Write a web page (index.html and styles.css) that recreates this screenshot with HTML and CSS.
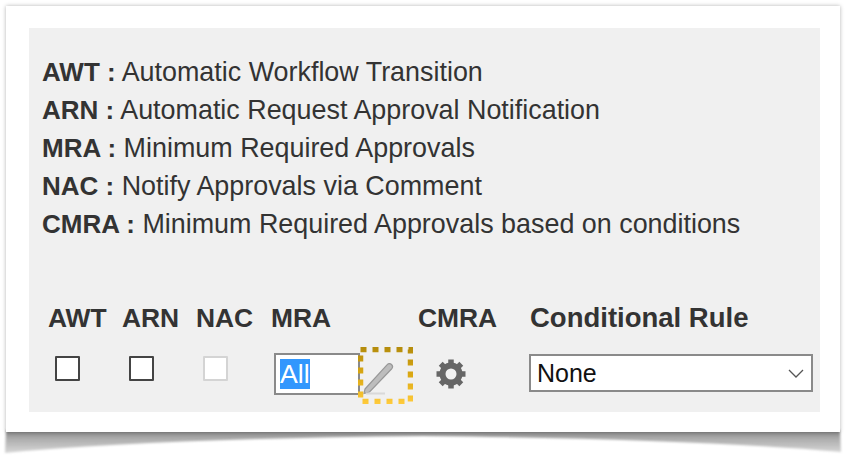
FILE: index.html
```html
<!DOCTYPE html>
<html lang="en">
<head>
    <meta charset="UTF-8">
    <meta name="viewport" content="width=device-width, initial-scale=1.0">
    <title>Approval settings legend</title>
    <link rel="stylesheet" href="styles.css">
</head>
<body>
    <svg class="shadow" width="854" height="461" viewBox="0 0 854 461">
        <defs>
            <linearGradient id="shadowFill" gradientUnits="userSpaceOnUse" x1="0" y1="432" x2="0" y2="454">
                <stop offset="0" stop-color="#8c8c8c"/>
                <stop offset="0.3" stop-color="#acacac"/>
                <stop offset="1" stop-color="#dadada"/>
            </linearGradient>
            <filter id="soft"><feGaussianBlur stdDeviation="1"/></filter>
        </defs>
        <path d="M6 430H840L841 452Q700 439 423 436Q150 439 5 453Z" fill="url(#shadowFill)" filter="url(#soft)"/>
    </svg>
    <div class="card">
        <div class="panel">
            <ul class="legend">
                <li><b>AWT :</b> Automatic Workflow Transition</li>
                <li><b>ARN :</b> Automatic Request Approval Notification</li>
                <li><b>MRA :</b> Minimum Required Approvals</li>
                <li><b>NAC :</b> Notify Approvals via Comment</li>
                <li><b>CMRA :</b> Minimum Required Approvals based on conditions</li>
            </ul>
            <div class="settings">
                <div class="head">AWT</div>
                <div class="head">ARN</div>
                <div class="head">NAC</div>
                <div class="head">MRA</div>
                <div class="head">CMRA</div>
                <div class="head wide">Conditional Rule</div>

                <div class="cell"><span class="check"></span></div>
                <div class="cell"><span class="check"></span></div>
                <div class="cell"><span class="check off"></span></div>
                <div class="cell">
                    <div class="field"><span class="picked">All</span></div>
                    <svg class="edit" width="55" height="57" viewBox="0 0 55 57">
                        <defs>
                            <linearGradient id="dots" gradientUnits="userSpaceOnUse" x1="0" y1="0" x2="0" y2="57">
                                <stop offset="0" stop-color="#b48c0c"/>
                                <stop offset="0.5" stop-color="#dca913"/>
                                <stop offset="1" stop-color="#ffcb3c"/>
                            </linearGradient>
                        </defs>
                        <path d="M7 42L29 18C30 16.500 32 16 33.500 17.500C35 19 34.500 21 33.500 22L11.500 45L6 46.500Z" fill="#bdbdbd" stroke="#989898" stroke-width="1.200"/>
                        <path d="M8 46.500H27" stroke="#d9d9d9" stroke-width="2"/>
                        <rect x="2.500" y="2.500" width="50" height="52" fill="none" stroke="url(#dots)" stroke-width="5.500" stroke-dasharray="6 6"/>
                    </svg>
                </div>
                <div class="cell gear-cell">
                    <svg width="32" height="32" viewBox="0 0 32 32">
                        <circle cx="16" cy="16" r="8.500" fill="none" stroke="#666" stroke-width="6"/>
                        <path d="M16 1.500V6M16 26V30.500M1.500 16H6M26 16H30.500M5.700 5.700L9 9M23 23L26.300 26.300M26.300 5.700L23 9M9 23L5.700 26.300" stroke="#666" stroke-width="5.500"/>
                    </svg>
                </div>
                <div class="cell">
                    <div class="select">
                        <span>None</span>
                        <svg width="16" height="9" viewBox="0 0 16 9"><path d="M1 1L8 8L15 1" fill="none" stroke="#555" stroke-width="1.300"/></svg>
                    </div>
                </div>
            </div>
        </div>
    </div>
</body>
</html>
```

FILE: styles.css
```css
body {
    font-family: "Liberation Sans", Arial, sans-serif;
    background-color: #fff;
    color: #333;
    margin: 0;
    padding: 6px 14px 0 6px;
    height: 455px;
    box-sizing: border-box;
    overflow: hidden;
}
.shadow {
    position: absolute;
    left: 0;
    top: 0;
}
.card {
    position: relative;
    height: 426px;
    box-sizing: border-box;
    padding: 22px 20px 20px 23px;
    background: #fff;
    box-shadow: 0 0 4px rgba(0, 0, 0, 0.3);
}
.panel {
    height: 384px;
    box-sizing: border-box;
    padding: 25px 0 0 13px;
    background: #f0f0f0;
}
.legend {
    list-style: none;
    margin: 0;
    padding: 0;
    font-size: 26.9px;
    line-height: 38px;
}
.legend b {
    font-size: 26px;
}
.settings {
    display: grid;
    grid-template-columns: 74px 74px 75px 147px 112px 284px;
    grid-template-rows: 39px 60px;
    margin: 59px 0 0 6px;
}
.head {
    font-size: 26.4px;
    font-weight: bold;
    line-height: 32px;
    white-space: nowrap;
}
.head.wide {
    font-size: 27.5px;
}
.cell {
    display: flex;
    align-items: center;
    height: 60px;
}
.check {
    display: block;
    width: 21px;
    height: 21px;
    margin: 0 0 6px 7px;
    border: 2px solid #444;
    border-radius: 1px;
    background: #fff;
}
.check.off {
    border-color: #d4d4d4;
}
.field {
    flex: none;
    box-sizing: border-box;
    width: 86px;
    height: 42px;
    margin: 6px 0 0 3px;
    padding: 4px 0 0 4px;
    border: 2px solid #8a8a8a;
    background: #fff;
    color: #fff;
    font-size: 26.7px;
    line-height: 30px;
}
.picked {
    display: inline-block;
    height: 30px;
    background: #3297fd;
}
.edit {
    flex: none;
    margin: 9px 0 0 -2px;
}
.gear-cell svg {
    margin: 6px 0 0 17px;
}
.select {
    display: flex;
    align-items: center;
    justify-content: space-between;
    box-sizing: border-box;
    width: 284px;
    height: 38px;
    margin: 4px 0 0 -1px;
    padding: 0 7px 0 6px;
    border: 2px solid #8a8a8a;
    background: #fff;
    color: #111;
    font-size: 25px;
}
```
